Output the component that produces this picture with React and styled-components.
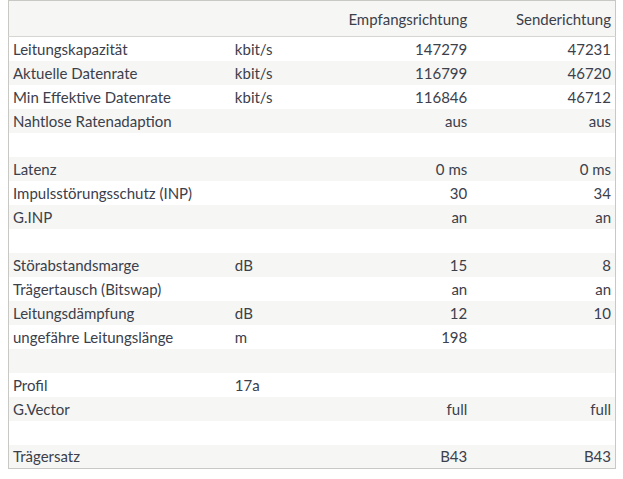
import React from "react";
import styled, { createGlobalStyle } from "styled-components";

const Global = createGlobalStyle`
  html, body { margin: 0; padding: 0; background: #ffffff; }
  body { font-family: Lato, "Liberation Sans", sans-serif; }
`;

const Page = styled.div`
  padding: 0 0 0 8px;
`;

const Table = styled.table`
  width: 608px;
  table-layout: fixed;
  border-collapse: collapse;
  border: 1px solid #c8c8c4;
  font-size: 15px;
  color: #3b404b;
`;

const HeadRow = styled.tr`
  background: #f6f6f4;
  border-bottom: 1px solid #d6d6d2;
`;

const Row = styled.tr`
  background: ${(p) => (p.$striped ? "#f6f6f4" : "#ffffff")};
`;

const Cell = styled.td`
  box-sizing: border-box;
  height: 24px;
  padding: 0 4px;
  line-height: 18px;
  text-align: ${(p) => (p.$right ? "right" : "left")};
  white-space: nowrap;
  font-weight: normal;
  vertical-align: middle;
`;

const HeadCell = styled(Cell).attrs({ as: "th" })`
  height: 36px;
`;

const rows = [
  ["Leitungskapazität", "kbit/s", "147279", "47231"],
  ["Aktuelle Datenrate", "kbit/s", "116799", "46720"],
  ["Min Effektive Datenrate", "kbit/s", "116846", "46712"],
  ["Nahtlose Ratenadaption", "", "aus", "aus"],
  ["", "", "", ""],
  ["Latenz", "", "0 ms", "0 ms"],
  ["Impulsstörungsschutz (INP)", "", "30", "34"],
  ["G.INP", "", "an", "an"],
  ["", "", "", ""],
  ["Störabstandsmarge", "dB", "15", "8"],
  ["Trägertausch (Bitswap)", "", "an", "an"],
  ["Leitungsdämpfung", "dB", "12", "10"],
  ["ungefähre Leitungslänge", "m", "198", ""],
  ["", "", "", ""],
  ["Profil", "17a", "", ""],
  ["G.Vector", "", "full", "full"],
  ["", "", "", ""],
  ["Trägersatz", "", "B43", "B43"],
];

export default function App() {
  return (
    <>
      <Global />
      <Page>
        <Table>
          <colgroup>
            <col style={{ width: 222 }} />
            <col style={{ width: 100 }} />
            <col style={{ width: 140 }} />
            <col style={{ width: 144 }} />
          </colgroup>
          <thead>
            <HeadRow>
              <HeadCell />
              <HeadCell />
              <HeadCell $right>Empfangsrichtung</HeadCell>
              <HeadCell $right>Senderichtung</HeadCell>
            </HeadRow>
          </thead>
          <tbody>
            {rows.map((r, i) => (
              <Row key={i} $striped={i % 2 === 1}>
                <Cell>{r[0]}</Cell>
                <Cell>{r[1]}</Cell>
                <Cell $right>{r[2]}</Cell>
                <Cell $right>{r[3]}</Cell>
              </Row>
            ))}
          </tbody>
        </Table>
      </Page>
    </>
  );
}
